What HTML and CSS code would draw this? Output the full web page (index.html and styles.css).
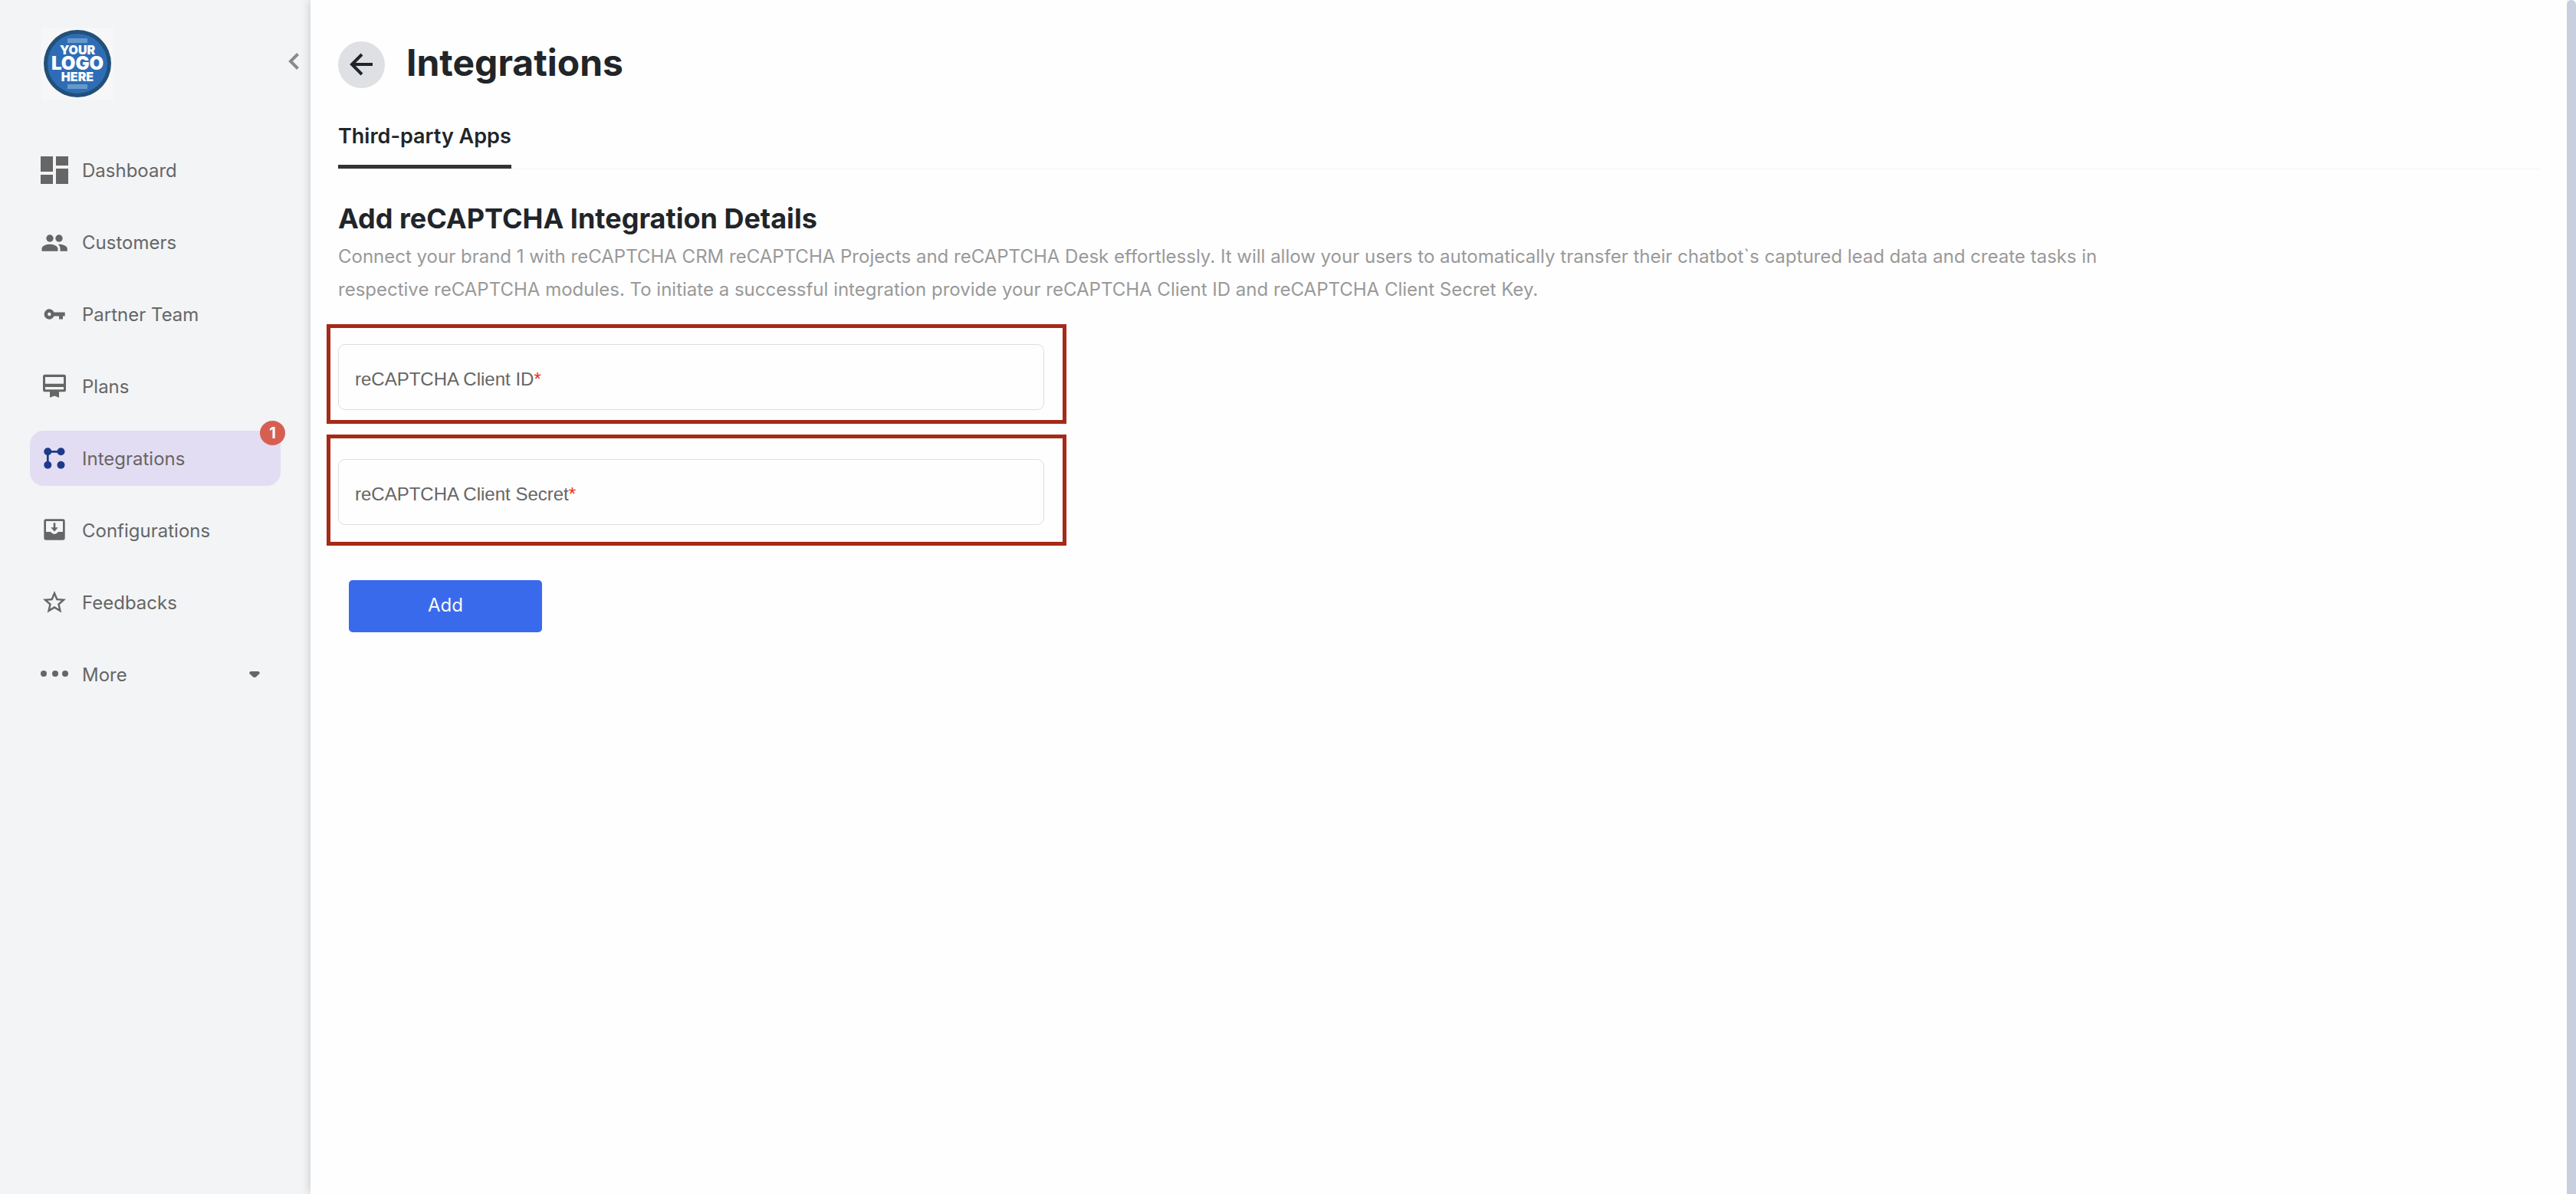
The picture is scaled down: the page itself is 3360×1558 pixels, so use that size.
FILE: index.html
```html
<!DOCTYPE html>
<html lang="en">
<head>
<meta charset="utf-8">
<title>Integrations</title>
<link rel="stylesheet" href="styles.css">
</head>
<body>
<div class="app">
	<aside class="sidebar">
		<div class="brand">
			<a class="logo" href="#">
				<svg viewBox="0 0 94 94" role="img" aria-label="Your logo here">
					<rect width="94" height="94" fill="#f7f7f7"/>
					<circle cx="47" cy="47" r="44" fill="#225079"/>
					<circle cx="47" cy="47" r="39" fill="#2e6db6"/>
					<path d="M34 14h26v6H34zM34 74h26v6H34z" fill="#669ac9"/>
					<text class="logo-small" x="47" y="35">YOUR</text>
					<text class="logo-big" x="47" y="55">LOGO</text>
					<text class="logo-small" x="47" y="70">HERE</text>
				</svg>
			</a>
			<button class="collapse" aria-label="Collapse menu">
				<svg viewBox="0 0 16 24"><path d="M13.500 2.500L4 12l9.500 9.500"/></svg>
			</button>
		</div>
		<nav class="menu">
			<a href="#"><svg viewBox="0 0 36 36"><path d="M0 0h16v20H0zM20 0h16v12H20zM0 24h16v12H0zM20 16h16v20H20z"/></svg>Dashboard</a>
			<a href="#"><svg viewBox="0 0 36 36"><circle cx="12" cy="13" r="4.700"/><circle cx="24" cy="13" r="4.700"/><path d="M1.500 29.700v-3.200c0-3.800 6-5.800 10.500-5.800s10.500 2 10.500 5.800v3.200zM23.500 20.700c5 0 11.300 2 11.300 5.800v3.200H25.500v-3.200c0-2.500-1-4.300-2.800-5.600z"/></svg>Customers</a>
			<a href="#"><svg viewBox="0 0 36 36"><path fill-rule="evenodd" d="M17.500 15.500h14.200v5H29v4h-5v-4h-6.500a6.700 6.700 0 1 1 0-5zM11.300 15.800a2.200 2.200 0 1 0 0 4.400 2.200 2.200 0 0 0 0-4.400z"/></svg>Partner Team</a>
			<a href="#"><svg viewBox="0 0 36 36"><path fill-rule="evenodd" d="M5.500 2.700h25A2.500 2.500 0 0 1 33 5.200v17.500a2.500 2.500 0 0 1-2.500 2.500H24v7.500l-2.500-.7q-3.500-2.600-7 0l-2.500.7v-7.500H5.500A2.500 2.500 0 0 1 3 22.700V5.200a2.500 2.500 0 0 1 2.500-2.500zM6 6v8.700h24V6zM6 19v3.200h24V19z"/></svg>Plans</a>
			<a class="active" href="#"><svg viewBox="0 0 36 36"><path d="M9.300 26.700V9.300h17" fill="none" stroke="#1e3a8a" stroke-width="2.700"/><circle cx="9.300" cy="9.300" r="5"/><circle cx="26.500" cy="9.300" r="5"/><circle cx="9.300" cy="26.700" r="5"/><circle cx="26.500" cy="26.700" r="5"/></svg>Integrations<span class="badge">1</span></a>
			<a href="#"><svg viewBox="0 0 36 36"><path fill-rule="evenodd" d="M7 3.300h22a2.700 2.700 0 0 1 2.700 2.700v22a2.700 2.700 0 0 1-2.700 2.700H7A2.700 2.700 0 0 1 4.300 28V6A2.700 2.700 0 0 1 7 3.300zM7 6v14h6q5 6 10 0h6V6zM16.700 8.300h2.600v6h3.400L18 19.700l-4.700-5.400h3.400z"/></svg>Configurations</a>
			<a href="#"><svg viewBox="0 0 24 24"><path d="M22 9.240l-7.190-.62L12 2 9.190 8.630 2 9.240l5.460 4.730L5.820 21 12 17.270 18.180 21l-1.630-7.030L22 9.240zM12 15.400l-3.760 2.270 1-4.280-3.320-2.880 4.380-.38L12 6.100l1.710 4.040 4.380.38-3.320 2.880 1 4.280L12 15.400z"/></svg>Feedbacks</a>
			<a href="#"><svg viewBox="0 0 36 36"><circle cx="4" cy="17" r="4"/><circle cx="19" cy="17" r="4"/><circle cx="32" cy="17" r="4"/></svg>More<svg class="caret" viewBox="0 0 14 8"><path d="M2 0h10q3 1.500 1 3.500L9 7.200q-2 1.600-4 0L1 3.500Q-1 1.500 2 0z"/></svg></a>
		</nav>
	</aside>
	<main class="content">
		<header class="page-head">
			<button class="back" aria-label="Back">
				<svg viewBox="0 0 32 32"><path d="M30 16H4M16 3L3 16l13 13"/></svg>
			</button>
			<h1>Integrations</h1>
		</header>
		<div class="tabs"><a class="tab" href="#">Third-party Apps</a></div>
		<h2>Add reCAPTCHA Integration Details</h2>
		<p class="intro">Connect your brand 1 with reCAPTCHA CRM reCAPTCHA Projects and reCAPTCHA Desk effortlessly. It will allow your users to automatically transfer their chatbot`s captured lead data and create tasks in<br>respective reCAPTCHA modules. To initiate a successful integration provide your reCAPTCHA Client ID and reCAPTCHA Client Secret Key.</p>
		<form class="details">
			<div class="highlight">
				<div class="field">
					<input type="text" id="client-id" required>
					<label for="client-id">reCAPTCHA Client ID<span>*</span></label>
				</div>
			</div>
			<div class="highlight tall">
				<div class="field">
					<input type="text" id="client-secret" required>
					<label for="client-secret">reCAPTCHA Client Secret<span>*</span></label>
				</div>
			</div>
			<button class="add" type="submit">Add</button>
		</form>
	</main>
	<div class="scrollbar"></div>
</div>
</body>
</html>
```
FILE: styles.css
```css
* {box-sizing: border-box;}

body {
	margin: 0;
	color: #212529;
	font-family: Inter, "Liberation Sans", sans-serif;
	font-size: 24px;
	background: #fefefe;
}

a {
	color: inherit;
	text-decoration: none;
}

button {
	padding: 0;
	border: none;
	font: inherit;
	cursor: pointer;
}

svg {display: block;}

.app {
	display: flex;
	min-height: 100vh;
}

/* sidebar */
.sidebar {
	flex: none;
	width: 405px;
	background: #f2f4f6;
}

.brand {
	display: flex;
	justify-content: space-between;
	height: 186px;
	padding: 36px 14px 0 54px;
}

.logo svg {
	width: 94px;
	height: 94px;
}

.logo text {
	fill: #fff;
	font-weight: 900;
	text-anchor: middle;
}

.logo-small {font-size: 16px;}
.logo-big {font-size: 24px;}

.collapse {
	align-self: flex-start;
	margin-top: 32px;
	background: none;
}

.collapse svg {
	width: 16px;
	height: 24px;
	fill: none;
	stroke: #8a8a8a;
	stroke-width: 4;
}

.menu {
	display: flex;
	flex-direction: column;
	gap: 22px;
	padding: 0 39px;
}

.menu a {
	position: relative;
	display: flex;
	align-items: center;
	gap: 18px;
	height: 72px;
	padding: 0 27px 0 14px;
	border-radius: 18px;
	color: #666;
}

.menu svg {
	width: 36px;
	height: 36px;
	fill: #666;
}

.menu .active {background: #e3ddf3;}
.menu .active svg {fill: #1e3a8a;}

.menu .caret {
	width: 14px;
	height: 8px;
	margin-left: auto;
}

.badge {
	position: absolute;
	top: -13px;
	right: -6px;
	width: 33px;
	border-radius: 50%;
	color: #fff;
	font-size: 20px;
	font-weight: 700;
	line-height: 32px;
	text-align: center;
	background: #d75f51;
}

/* page */
.content {
	flex: 1;
	padding: 48px 36px;
	background: #fefefe;
	box-shadow: 0 0 12px rgba(0, 0, 0, .2);
}

.scrollbar {
	flex: none;
	width: 12px;
	border-radius: 6px 6px 0 0;
	background: #c8cfdf;
}

.page-head {
	display: flex;
	align-items: center;
	gap: 28px;
	height: 72px;
}

.back {
	display: flex;
	align-items: center;
	justify-content: center;
	width: 61px;
	height: 61px;
	border-radius: 50%;
	background: #dfe0e4;
}

.back svg {
	width: 32px;
	height: 32px;
	fill: none;
	stroke: #212529;
	stroke-width: 4;
}

h1 {
	margin: 0;
	padding-bottom: 6px;
	font-size: 48px;
	font-weight: 700;
}

.tabs {
	display: flex;
	margin-top: 38px;
	border-bottom: 1px solid #f2f2f2;
}

.tab {
	padding-bottom: 17px;
	border-bottom: 5px solid #333;
	font-size: 27px;
	font-weight: 600;
	line-height: 40px;
}

h2 {
	margin: 40px 0 0;
	font-size: 36px;
	font-weight: 700;
	line-height: 48px;
}

.intro {
	margin: 4px 0 0;
	color: #999;
	line-height: 43px;
}

.details {
	width: 965px;
	max-width: 100%;
	margin: 24px 0 0 -15px;
	font-family: "Liberation Sans", Arial, sans-serif;
}

.highlight {
	padding: 21px 24px 13px 10px;
	border: 5px solid #a52a17;
}

.highlight.tall {
	margin-top: 14px;
	padding-top: 27px;
	padding-bottom: 22px;
}

.field {position: relative;}

.field input {
	display: block;
	width: 100%;
	height: 86px;
	padding: 0 22px;
	border: 1px solid #dedede;
	border-radius: 9px;
	font: inherit;
	background: none;
}

.field label {
	position: absolute;
	top: 31px;
	left: 22px;
	color: #666;
	line-height: 30px;
	pointer-events: none;
}

.field span {color: #f03020;}

.add {
	width: 252px;
	height: 68px;
	margin: 45px 0 0 29px;
	padding-bottom: 4px;
	border-radius: 5px;
	color: #f8f8f8;
	font-family: Inter, sans-serif;
	background: #3a6aec;
}
```
